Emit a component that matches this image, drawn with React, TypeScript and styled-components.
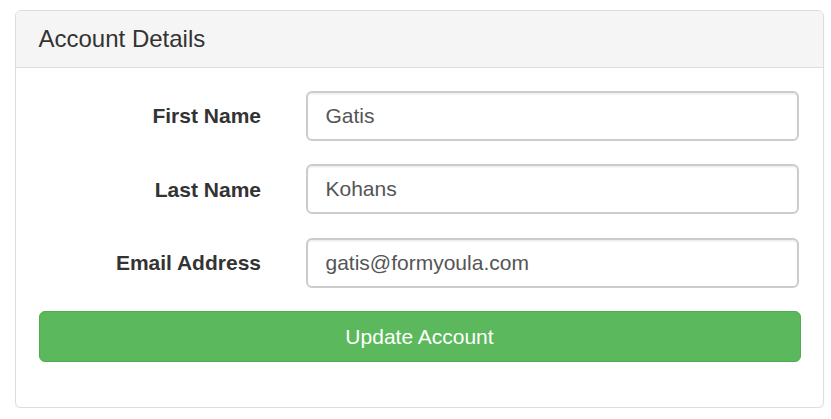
import { FC, useState } from "react";
import styled, { createGlobalStyle } from "styled-components";

const GlobalStyle = createGlobalStyle`
  * {
    box-sizing: border-box;
  }
  body {
    margin: 0;
    background: #fff;
    font-family: "Liberation Sans", Arial, sans-serif;
    color: #333;
  }
`;

const Page = styled.div`
  padding: 10px 7px 0 15px;
`;

const Panel = styled.div`
  width: 809px;
  border: 1.5px solid #ddd;
  border-radius: 6px;
  background: #fff;
  box-shadow: 0 1.5px 1.5px rgba(0, 0, 0, 0.05);
  overflow: hidden;
`;

const PanelHeading = styled.div`
  background: #f5f5f5;
  border-bottom: 1.5px solid #ddd;
  padding: 15px 22.5px;
`;

const PanelTitle = styled.h3`
  margin: 0;
  font-size: 24px;
  line-height: 1.1;
  font-weight: 400;
  color: #333;
`;

const PanelBody = styled.div`
  padding: 22.5px;
`;

const FormRow = styled.div`
  display: grid;
  grid-template-columns: 244.5px 1fr;
  column-gap: 22.5px;
  align-items: start;
  margin-bottom: 23.5px;
  padding-right: 2px;
`;

const Label = styled.label`
  text-align: right;
  font-weight: 700;
  font-size: 21px;
  line-height: 30px;
  padding-top: 10.5px;
  padding-right: 22px;
  color: #333;
`;

const TextInput = styled.input`
  display: block;
  width: 100%;
  height: 50px;
  padding: 9px 18px;
  font-family: inherit;
  font-size: 21px;
  line-height: 30px;
  color: #555;
  background: #fff;
  border: 2px solid #ccc;
  border-radius: 6px;
  box-shadow: inset 0 1.5px 1.5px rgba(0, 0, 0, 0.075);
  outline: none;
`;

const SubmitButton = styled.button`
  display: block;
  width: 100%;
  height: 51px;
  margin-bottom: 22.5px;
  font-family: inherit;
  font-size: 21px;
  line-height: 30px;
  color: #fff;
  background: #5cb85c;
  border: 1.5px solid #4cae4c;
  border-radius: 6px;
  cursor: pointer;
  &:hover {
    background: #449d44;
  }
`;

const fields = [
  { key: "firstName", label: "First Name" },
  { key: "lastName", label: "Last Name" },
  { key: "email", label: "Email Address" },
] as const;

const App: FC = () => {
  const [account, setAccount] = useState({
    firstName: "Gatis",
    lastName: "Kohans",
    email: "gatis@formyoula.com",
  });

  return (
    <Page>
      <GlobalStyle />
      <Panel>
        <PanelHeading>
          <PanelTitle>Account Details</PanelTitle>
        </PanelHeading>
        <PanelBody>
          {fields.map((f) => (
            <FormRow key={f.key}>
              <Label htmlFor={f.key}>{f.label}</Label>
              <TextInput
                id={f.key}
                value={account[f.key]}
                onChange={(e) =>
                  setAccount({ ...account, [f.key]: e.target.value })
                }
              />
            </FormRow>
          ))}
          <SubmitButton>Update Account</SubmitButton>
        </PanelBody>
      </Panel>
    </Page>
  );
};

export default App;
